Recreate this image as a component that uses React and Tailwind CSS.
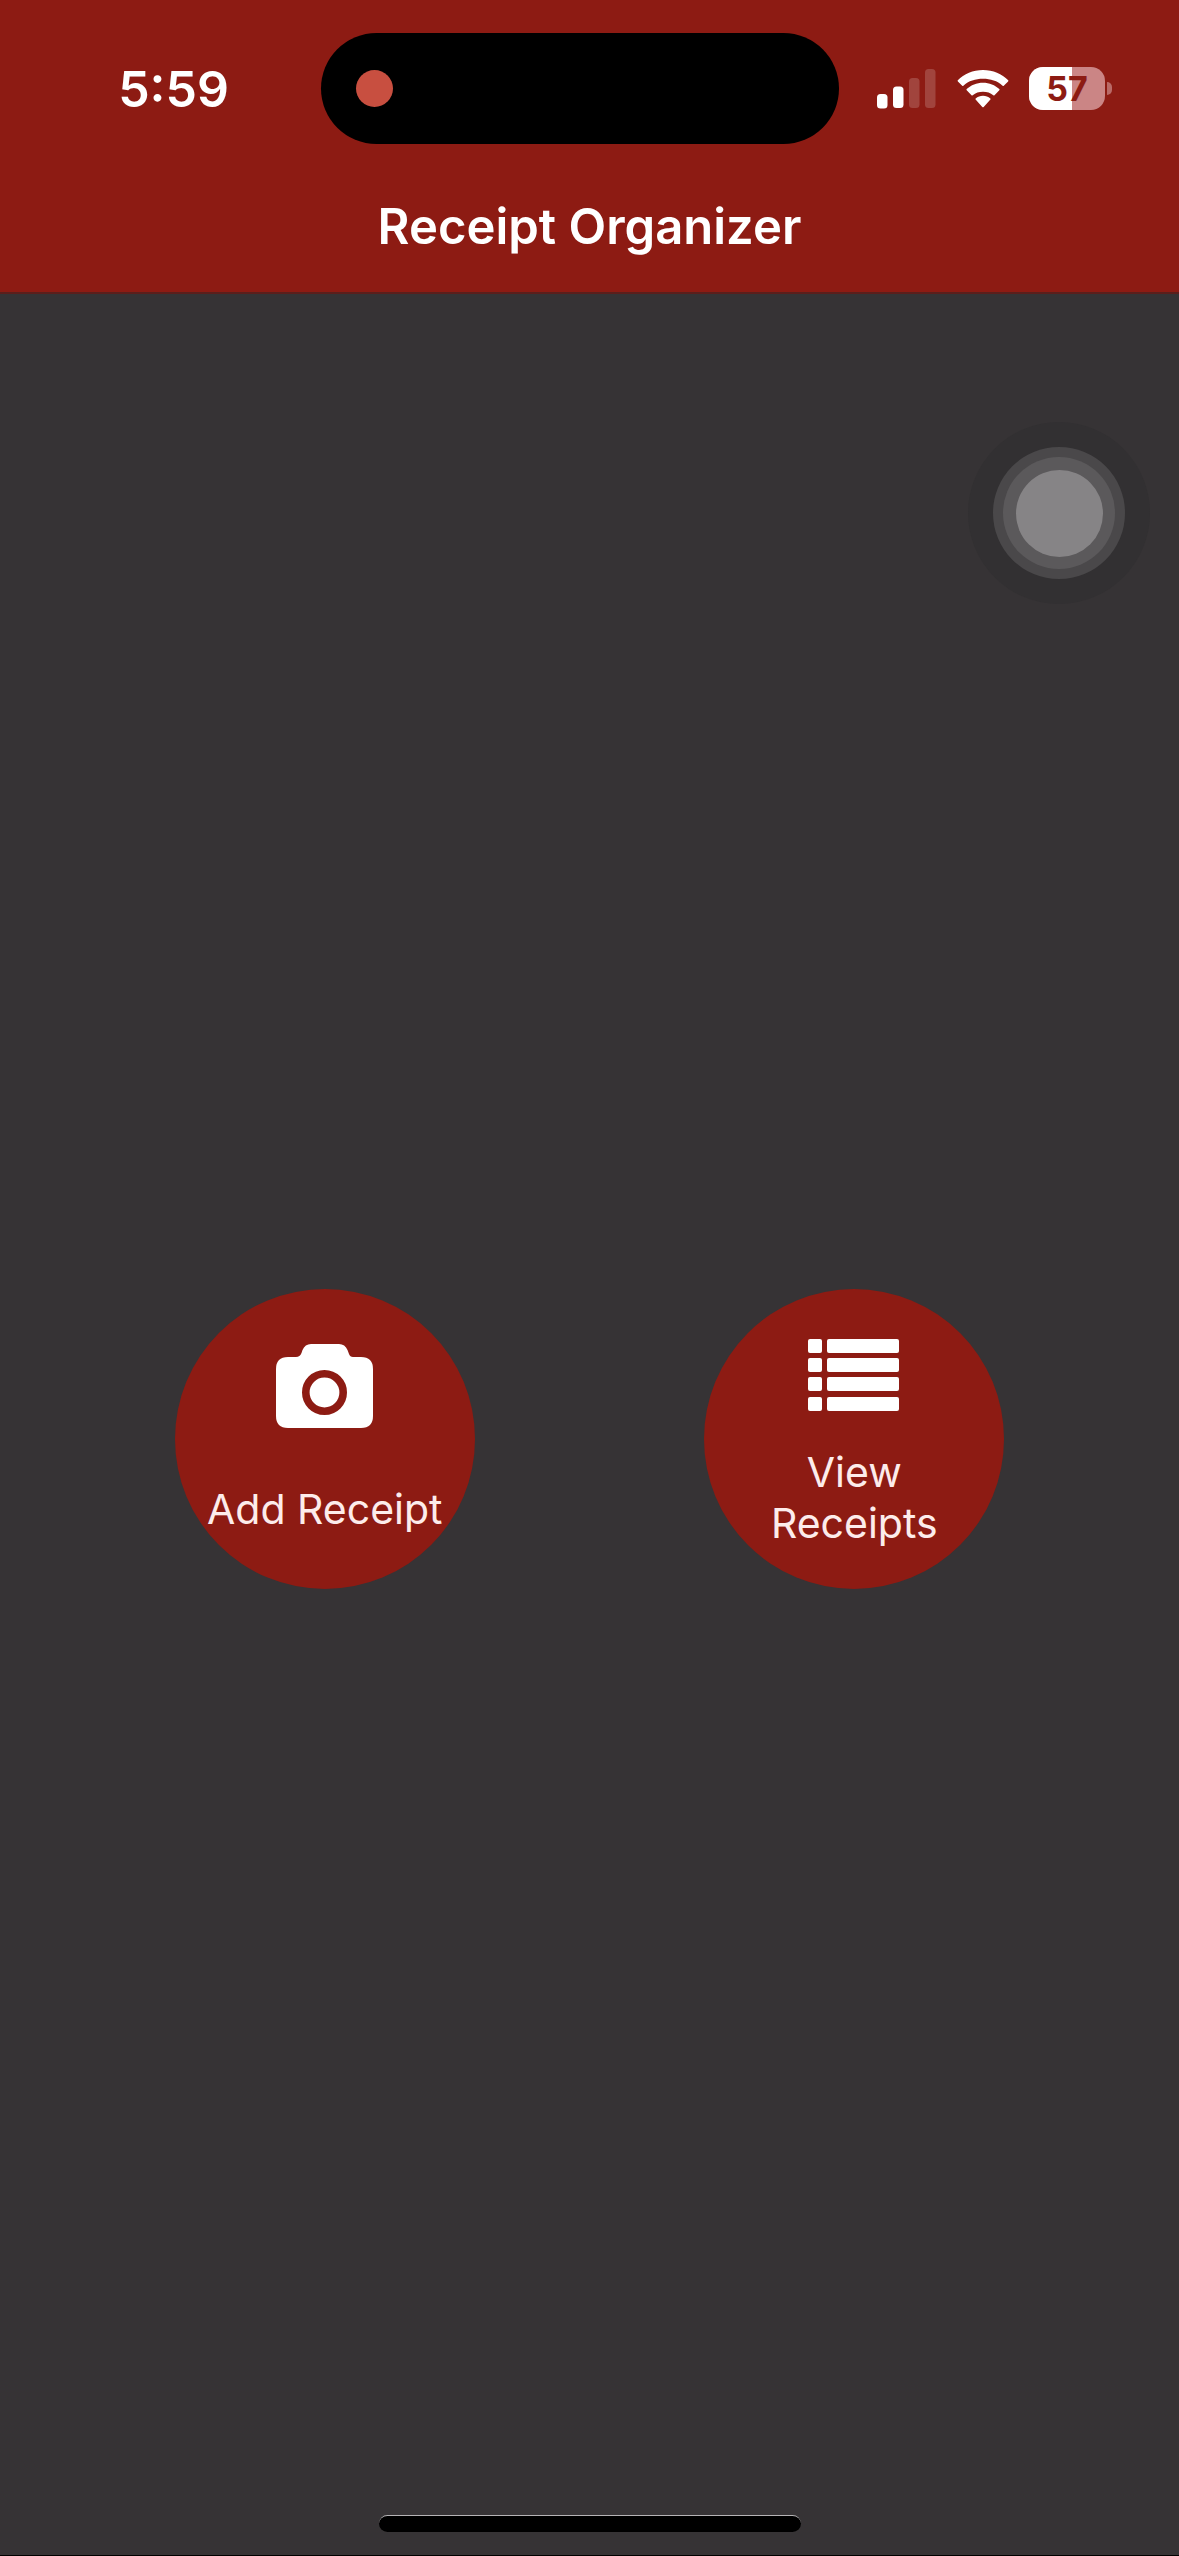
import React from "react";

function SignalIcon() {
  return (
    <svg className="h-[40px] w-[60px]" viewBox="0 0 60 40" fill="#fff" role="img" aria-label="Signal: 2 of 4 bars">
      <rect x="0" y="25" width="10.5" height="14.500" rx="3.5" />
      <rect x="16" y="17.500" width="10.500" height="21.500" rx="3.5" />
      <rect x="32" y="9" width="10.500" height="30" rx="3.5" fillOpacity="0.18" />
      <rect x="48" y="0" width="10.500" height="39" rx="3.5" fillOpacity="0.18" />
    </svg>
  );
}

function WifiIcon() {
  return (
    <svg className="h-[40px] w-[52px]" viewBox="0 0 52 40" fill="#fff" role="img" aria-label="Wi-Fi">
      <path d="M26 1C16 1 7 5 0.8 11.2Q0.3 11.8 0.9 12.4L5.2 16.8Q5.8 17.3 6.4 16.7C11.600 11.900 18.500 9.800 26 9.800S40.400 11.900 45.600 16.700Q46.200 17.300 46.800 16.800L51.100 12.400Q51.700 11.800 51.200 11.200C45 5 36 1 26 1Z" />
      <path d="M26 13.800C19.700 13.800 14 16.200 9.700 20.100Q9.100 20.700 9.700 21.300L14.500 26.300Q15.100 26.800 15.700 26.300C18.600 23.800 21.900 22.800 26 22.800S33.400 23.800 36.300 26.300Q36.900 26.800 37.500 26.300L42.300 21.300Q42.900 20.700 42.300 20.100C38 16.200 32.300 13.800 26 13.800Z" />
      <path d="M26 26.800C23.200 26.800 20.700 27.700 18.700 29.400Q18 30 18.600 30.600L25.300 38Q26 38.700 26.700 38L33.400 30.600Q34 30 33.300 29.400C31.300 27.700 28.800 26.800 26 26.800Z" />
    </svg>
  );
}

function Battery({ level }) {
  return (
    <div className="flex items-center gap-[2px]">
      <div className="relative flex h-[43px] w-[76px] items-center justify-center overflow-hidden rounded-[14px] bg-[#cb8585]">
        <div className="absolute inset-y-0 left-0 bg-white" style={{ width: `${level}%` }} />
        <span className="relative text-[34px] leading-none font-bold text-[#8d1b13]">{level}</span>
      </div>
      <div className="h-[13px] w-[5px] rounded-r-full bg-[#b96a67]" />
    </div>
  );
}

function StatusBar() {
  return (
    <div className="grid grid-cols-[321fr_518fr_340fr] items-center pt-[33px]">
      <time className="pr-[92px] text-right text-[50px] leading-none font-semibold">5:59</time>
      <div className="flex h-[111px] items-center rounded-full bg-black pl-[35px]">
        <span className="size-[37px] rounded-full bg-[#c84f40]" />
      </div>
      <div className="flex items-center justify-end gap-[20px] pr-[67px]">
        <SignalIcon />
        <WifiIcon />
        <Battery level={57} />
      </div>
    </div>
  );
}

function CameraIcon() {
  return (
    <svg className="h-[84px] w-[98px]" viewBox="0 0 98 84" aria-hidden="true">
      <path
        fill="#fff"
        d="M12 13H20Q24 13 25.500 9L26.500 6Q29 0 35 0H63Q69 0 71.500 6L73 10Q74 13 77 13H85Q97 13 97 25V72Q97 84 85 84H12Q0 84 0 72V25Q0 13 12 13Z"
      />
      <circle cx="48.500" cy="48.500" r="18.700" fill="none" stroke="#8d1b13" strokeWidth="7.600" />
    </svg>
  );
}

function ListIcon() {
  return (
    <svg className="h-[72px] w-[92px]" viewBox="0 0 92 72" fill="#fff" aria-hidden="true">
      {[0, 19, 38, 58].map((y) => (
        <g key={y}>
          <rect x="0" y={y} width="14" height="14" rx="2" />
          <rect x="19" y={y} width="72" height="14" rx="2" />
        </g>
      ))}
    </svg>
  );
}

function RoundButton({ icon, children }) {
  return (
    <button
      type="button"
      className="flex size-[300px] flex-col items-center justify-center rounded-full bg-[#8d1b13] pt-[10px] text-[41px] leading-[51px] text-[#fdeceb]"
    >
      {icon}
      {children}
    </button>
  );
}

export default function App() {
  return (
    <div className="flex min-h-screen flex-col border-b border-black bg-[#363335] font-['Inter',sans-serif] text-white">
      <header className="border-b-2 border-[#5a1f1c] bg-[#8d1b13]">
        <StatusBar />
        <h1 className="pt-[51px] pb-[33px] text-center text-[49px] leading-[64px] font-semibold">
          Receipt Organizer
        </h1>
      </header>

      <main className="relative flex grow items-center justify-around px-[60px] pt-[68px]">
        <button
          type="button"
          aria-label="AssistiveTouch"
          className="absolute top-[128px] right-[29px] flex size-[182px] items-center justify-center rounded-full bg-[#323032]"
        >
          <span className="flex size-[132px] items-center justify-center rounded-full bg-[#4a484a]">
            <span className="flex size-[112px] items-center justify-center rounded-full bg-[#5b595b]">
              <span className="size-[87px] rounded-full bg-[#868486]" />
            </span>
          </span>
        </button>

        <RoundButton icon={<CameraIcon />}>
          <span className="pt-[56px] pb-[8px]">Add Receipt</span>
        </RoundButton>
        <RoundButton icon={<ListIcon />}>
          <span className="w-[200px] pt-[36px]">View Receipts</span>
        </RoundButton>
      </main>

      <footer className="flex justify-center pb-[23px]">
        <div className="h-[17px] w-[422px] rounded-full border-t border-[#b5b3b5] bg-black" />
      </footer>
    </div>
  );
}
